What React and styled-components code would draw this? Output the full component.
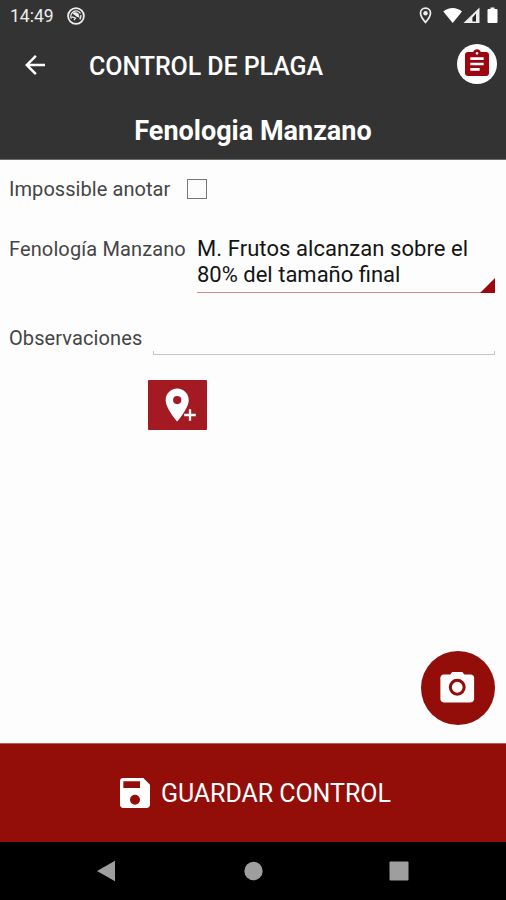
import React from "react";
import styled, { createGlobalStyle } from "styled-components";

const Global = createGlobalStyle`
  * { box-sizing: border-box; }
  body { margin: 0; background: #fdfdfd; font-family: Roboto, "Liberation Sans", sans-serif; }
  svg { display: block; flex: none; }
`;

const Screen = styled.div`
  width: 506px;
  height: 900px;
  display: flex;
  flex-direction: column;
  background: #fdfdfd;
  overflow: hidden;
`;

const Header = styled.header`
  height: 160px;
  background: #333333;
  border-bottom: 1px solid #6b6b6b;
  color: #fff;
`;

const StatusBar = styled.div`
  height: 32px;
  display: flex;
  align-items: center;
  padding: 0 8px 0 10px;
`;

const Clock = styled.span`
  width: 57px;
  font-size: 17.5px;
  line-height: 32px;
  color: #eee;
`;

const StatusIcons = styled.div`
  margin-left: auto;
  display: flex;
  align-items: center;
`;

const Toolbar = styled.div`
  height: 65px;
  display: flex;
  align-items: center;
  padding: 0 9px 0 20px;
`;

const IconButton = styled.button`
  display: flex;
  align-items: center;
  justify-content: center;
  flex: none;
  padding: 0;
  border: 0;
  background: none;
  color: inherit;
`;

const TasksButton = styled(IconButton)`
  width: 40px;
  height: 40px;
  margin: 0 0 1px auto;
  padding-bottom: 1px;
  border-radius: 50%;
  background: #fff;
  color: #9b0610;
`;

const Title = styled.h1`
  margin: 4px 0 0 39px;
  font-size: 25px;
  font-weight: 500;
  line-height: 30px;
  white-space: nowrap;
  letter-spacing: ${(p) => p.$tracking}px;
`;

const Subtitle = styled.h2`
  margin: 19px 0 0;
  font-size: 27px;
  font-weight: 700;
  line-height: 30px;
  text-align: center;
`;

const Form = styled.main`
  flex: 1;
  display: flex;
  flex-direction: column;
  padding: 16px 11px 0 9px;
`;

const Field = styled.div`
  display: flex;
  align-items: flex-start;
  height: ${(p) => p.$height}px;
`;

const Label = styled.label`
  flex: none;
  width: ${(p) => p.$width}px;
  font-size: 20px;
  line-height: 26px;
  color: #454545;
  letter-spacing: ${(p) => p.$tracking}px;
  white-space: nowrap;
`;

const Checkbox = styled.span`
  width: 20px;
  height: 20px;
  margin-top: 3px;
  border: 1px solid #777;
`;

const Spinner = styled.div`
  flex: 1;
  display: flex;
  align-items: flex-end;
  height: 57px;
  border-bottom: 1px solid #d9878e;
`;

const SpinnerValue = styled.div`
  flex: 1;
  align-self: flex-start;
  font-size: 22px;
  line-height: 26px;
  color: #141414;
  white-space: nowrap;
`;

const ValueLine = styled.span`
  display: block;
  letter-spacing: ${(p) => p.$tracking}px;
`;

const SpinnerCorner = styled.span`
  width: 15px;
  height: 15px;
  margin-bottom: -1px;
  background: #9b0610;
  clip-path: polygon(100% 0, 100% 100%, 0 100%);
`;

const TextLine = styled.div`
  flex: 1;
  height: 5px;
  margin-top: 25px;
  border: 1px solid #c4c4c4;
  border-top: 0;
  clip-path: inset(1px 0 0 0);
`;

const PinButton = styled(IconButton)`
  width: 59px;
  height: 50px;
  margin-left: 139px;
  border-radius: 1px;
  background: #a31a22;
  color: #fff;
`;

const CameraButton = styled(IconButton)`
  width: 74px;
  height: 74px;
  margin: auto 0 18px auto;
  padding: 0 1px 1px 0;
  border-radius: 50%;
  background: #930d09;
  color: #fff;
`;

const SaveBar = styled.button`
  height: 99px;
  flex: none;
  display: flex;
  align-items: center;
  padding: 0 0 0 115px;
  border: 0;
  border-top: 1px solid #b35c58;
  background: #930d09;
  color: #fff;
  font: 400 25px/30px Roboto, "Liberation Sans", sans-serif;
`;

const SaveText = styled.span`
  margin: 1px 0 0 6px;
  letter-spacing: ${(p) => p.$tracking}px;
`;

const NavBar = styled.nav`
  height: 58px;
  flex: none;
  display: flex;
  align-items: center;
  justify-content: space-between;
  padding: 0 97px 0 96px;
  background: #000;
  color: #9e9e9e;
`;

const PLACE = "M12 2C8.13 2 5 5.13 5 9c0 5.25 7 13 7 13s7-7.75 7-13c0-3.87-3.13-7-7-7zm0 9.5a2.5 2.5 0 0 1 0-5 2.5 2.5 0 0 1 0 5z";

const Icon = ({ size, d }) => (
  <svg width={size} height={size} viewBox="0 0 24 24" fill="currentColor"><path d={d} /></svg>
);

export default function App() {
  return (
    <Screen>
      <Global />
      <Header>
        <StatusBar>
          <Clock>14:49</Clock>
          <svg width="18" height="18" viewBox="0 0 18 18" fill="none" stroke="#eee">
            <circle cx="9" cy="9" r="7.9" strokeWidth="1.8" />
            <path d="M4.4 11.5A5.2 5.2 0 0 1 13.5 6.5M13.8 8A5 5 0 0 1 12.8 12.5" strokeWidth="1.4" />
            <path d="M5.5 6.5q3-2.5 6 .3l1.2 4.2-3.2-1.5z" fill="#eee" stroke="none" />
            <path d="M4.8 9.8l3.7 1.2-1.5 2.2" strokeWidth="1.3" />
          </svg>
          <StatusIcons>
            <svg width="80" height="20" viewBox="0 0 80 20">
              <path d="M7.5 2.2c-3 0-5 2.1-5 4.9 0 3.8 5 9.3 5 9.3s5-5.5 5-9.3c0-2.8-2-4.9-5-4.9z" fill="none" stroke="#eee" strokeWidth="1.7" />
              <circle cx="7.5" cy="7.2" r="2.2" fill="#eee" />
              <path d="M25.3 5.6C30.5.9 38.8.9 44 5.6L34.7 17z" fill="#fff" />
              <path d="M61.5 1.5V17H45.5z" fill="#eee" />
              <path d="M58 7.5V15.5H54.4V11.8z" fill="#222" />
              <path d="M70.5 3h2V1.4h4V3h2q1 0 1 1v12q0 1-1 1h-8q-1 0-1-1V4q0-1 1-1z" fill="#fff" />
            </svg>
          </StatusIcons>
        </StatusBar>
        <Toolbar>
          <IconButton aria-label="Volver">
            <Icon size={30} d="M20 11H7.83l5.59-5.59L12 4l-8 8 8 8 1.41-1.41L7.83 13H20v-2z" />
          </IconButton>
          <Title $tracking={-0.07}>CONTROL DE PLAGA</Title>
          <TasksButton aria-label="Tareas">
            <Icon size={32} d="M19 3h-4.18C14.4 1.84 13.3 1 12 1c-1.3 0-2.4.84-2.82 2H5c-1.1 0-2 .9-2 2v14c0 1.1.9 2 2 2h14c1.1 0 2-.9 2-2V5c0-1.1-.9-2-2-2zm-7 0c.55 0 1 .45 1 1s-.45 1-1 1-1-.45-1-1 .45-1 1-1zm2 14H7v-2h7v2zm3-4H7v-2h10v2zm0-4H7V7h10v2z" />
          </TasksButton>
        </Toolbar>
        <Subtitle>Fenologia Manzano</Subtitle>
      </Header>

      <Form>
        <Field $height={60}>
          <Label $width={178} $tracking={0.06}>Impossible anotar</Label>
          <Checkbox />
        </Field>
        <Field $height={89}>
          <Label $width={188} $tracking={0.12}>Fenología Manzano</Label>
          <Spinner>
            <SpinnerValue>
              <ValueLine $tracking={0.07}>M. Frutos alcanzan sobre el</ValueLine>
              <ValueLine $tracking={0}>80% del tamaño final</ValueLine>
            </SpinnerValue>
            <SpinnerCorner />
          </Spinner>
        </Field>
        <Field $height={55}>
          <Label $width={144} $tracking={0.1}>Observaciones</Label>
          <TextLine />
        </Field>
        <PinButton aria-label="Añadir ubicación">
          <svg width="59" height="50" viewBox="0 0 59 50">
            <path transform="translate(9.4 5.2) scale(1.65)" d={PLACE} fill="#fff" />
            <path d="M42 29.2v11.6M36.2 35h11.6" stroke="#fff" strokeWidth="2.3" />
          </svg>
        </PinButton>
        <CameraButton aria-label="Cámara">
          <Icon size={40.5} d="M12 8.8a3.2 3.2 0 1 0 0 6.4 3.2 3.2 0 0 0 0-6.4zM9 3L7.8 4.4H4c-1.1 0-2 .9-2 2V19c0 1.1.9 2 2 2h16c1.1 0 2-.9 2-2V6.4c0-1.1-.9-2-2-2h-3.8L15 3H9zm3 14a5 5 0 1 1 0-10 5 5 0 0 1 0 10z" />
        </CameraButton>
      </Form>

      <SaveBar>
        <Icon size={40} d="M17 3H5a2 2 0 0 0-2 2v14c0 1.1.9 2 2 2h14c1.1 0 2-.9 2-2V7l-4-4zm-5 16a3 3 0 1 1 0-6 3 3 0 0 1 0 6zm3-10H5V5h10v4z" />
        <SaveText $tracking={-0.06}>GUARDAR CONTROL</SaveText>
      </SaveBar>

      <NavBar>
        <svg width="20" height="22" viewBox="0 0 20 22" fill="currentColor"><path d="M1 11L19 .8v20.4z" /></svg>
        <svg width="20" height="20" viewBox="0 0 20 20" fill="currentColor"><circle cx="10.5" cy="10" r="9.2" /></svg>
        <svg width="20" height="20" viewBox="0 0 20 20" fill="currentColor"><rect x=".5" y=".5" width="19" height="19" rx="1" /></svg>
      </NavBar>
    </Screen>
  );
}
